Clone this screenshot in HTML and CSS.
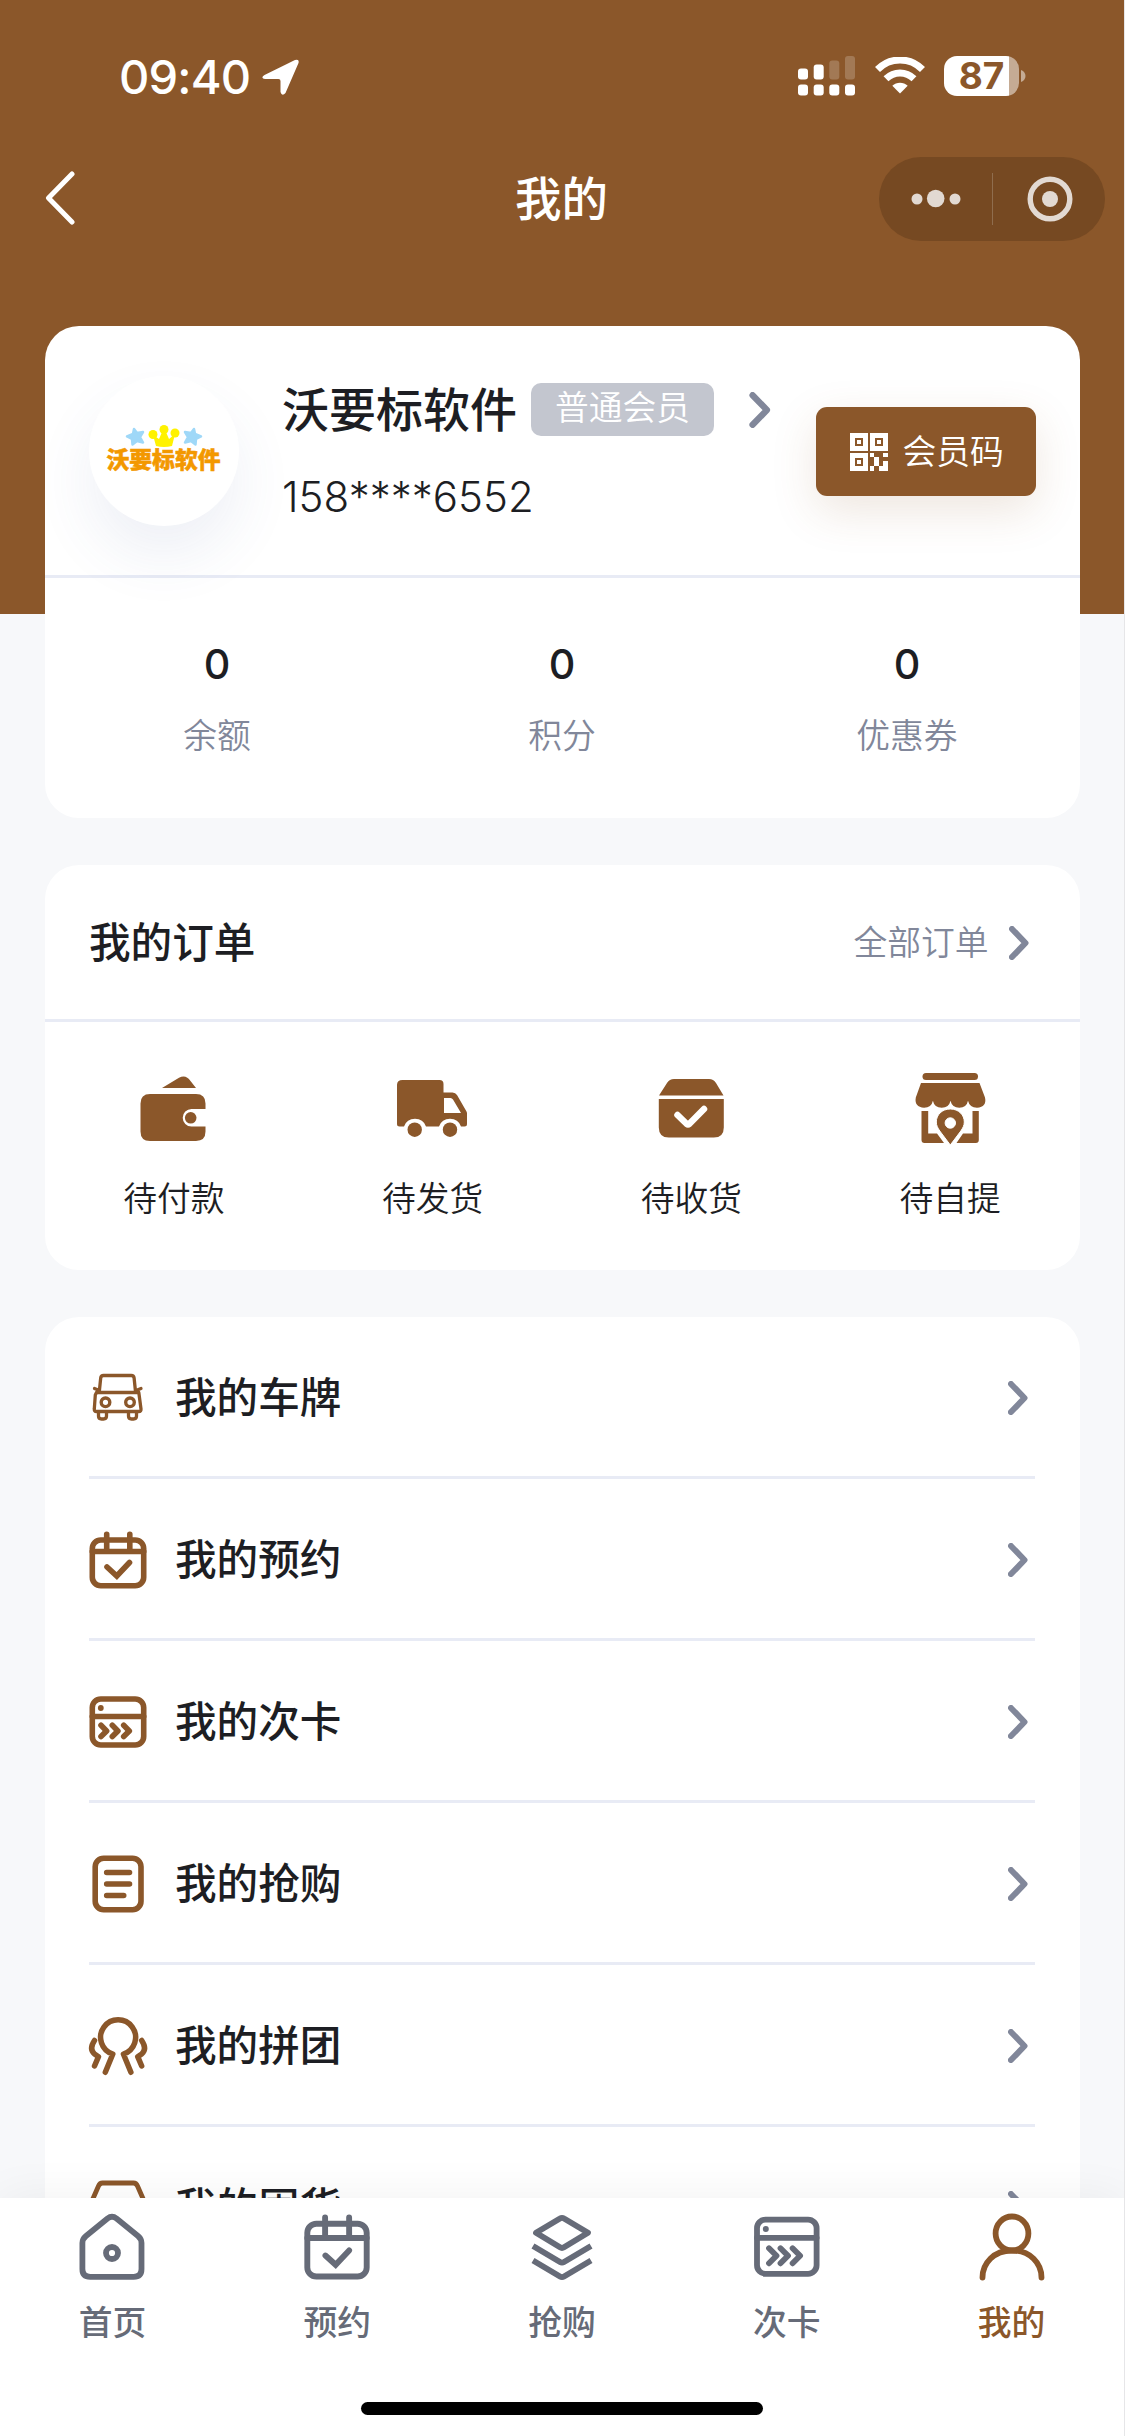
FILE: index.html
```html
<!DOCTYPE html>
<html lang="zh-CN">
<head>
<meta charset="utf-8">
<title>我的</title>
<link rel="stylesheet" href="styles.css">
</head>
<body>
<svg class="defs" width="0" height="0">
  <symbol id="chevron" viewBox="0 0 20 34"><path d="M3 3l13.500 14L3 31" fill="none" stroke="currentColor" stroke-width="6" stroke-linecap="round" stroke-linejoin="round"/></symbol>
  <symbol id="card" viewBox="0 0 60 60"><g fill="none" stroke="currentColor" stroke-width="5.600" stroke-linecap="round" stroke-linejoin="round"><rect x="4.300" y="7" width="51.400" height="46" rx="8.500"/><path d="M4.300 24.500h51.400"/><path d="M13 33.300l5.600 5.600-5.600 5.600M24.300 33.300l5.600 5.600-5.600 5.600M35.700 33.300l5.600 5.600-5.600 5.600"/></g><circle cx="12.800" cy="16" r="2.900" fill="currentColor"/></symbol>
  <symbol id="calendar" viewBox="0 0 60 60"><g fill="none" stroke="currentColor" stroke-width="5.600" stroke-linecap="round" stroke-linejoin="round"><rect x="4.300" y="10" width="51.400" height="45.800" rx="8.500"/><path d="M4.300 21.500h51.400M18.700 4.200V20M41.800 4.200V20"/><path d="M19 37l9.800 9L41.500 32.500" stroke-linejoin="miter"/></g></symbol>
</svg>
<div class="page">
  <header class="hero">
    <div class="status">
      <div class="clock">
        <span class="time">09:40</span>
        <svg width="38" height="38" viewBox="0 0 38 38"><path d="M2.500 17L33 2q4.500-1.500 3.500 3L23.500 35q-3.500 4-5-1V23q0-2-2-2H3q-5-1-.5-4z" fill="#fff"/></svg>
      </div>
      <div class="signals">
        <svg width="58" height="40" viewBox="0 0 58 40" fill="#fff"><rect x="0" y="12.500" width="10" height="11" rx="3"/><rect x="15.700" y="8.500" width="10" height="15" rx="3"/><g opacity=".2"><rect x="31.300" y="4.500" width="10" height="19" rx="3"/><rect x="47" y="0" width="10" height="23.500" rx="3"/></g><rect x="0" y="28.500" width="10" height="11" rx="3"/><rect x="15.700" y="28.500" width="10" height="11" rx="3"/><rect x="31.300" y="28.500" width="10" height="11" rx="3"/><rect x="47" y="28.500" width="10" height="11" rx="3"/></svg>
        <svg class="wifi" width="50" height="37" viewBox="0 0 50 37" fill="none" stroke="#fff"><path d="M2.500 12.500C15-.200 35-.200 47.500 12.500M11 21.800c8-7.800 20-7.800 28 0" stroke-width="7"/><path d="M25 36.500L17.300 28.700c4.200-4 11.200-4 15.400 0z" fill="#fff" stroke="none"/></svg>
        <div class="battery"><span class="level">87</span></div>
        <svg width="6" height="14" viewBox="0 0 6 14"><path d="M0 1c6 2 6 10 0 12z" fill="#c5ab94"/></svg>
      </div>
    </div>
    <nav class="navbar">
      <svg class="back" width="30" height="54" viewBox="0 0 30 54"><path d="M27 3L3.500 27 27 51" fill="none" stroke="#fff" stroke-width="5" stroke-linecap="round" stroke-linejoin="round"/></svg>
      <h1 class="title">我的</h1>
      <div class="capsule">
        <svg class="more" width="50" height="20" viewBox="0 0 50 20" fill="#e2d9d2"><circle cx="6" cy="10" r="5.500"/><circle cx="24.700" cy="9.500" r="8.800"/><circle cx="44" cy="10" r="5.500"/></svg>
        <span class="bar"></span>
        <svg class="close" width="46" height="46" viewBox="0 0 46 46"><circle cx="23" cy="23" r="19.800" fill="none" stroke="#e2d9d2" stroke-width="5.400"/><circle cx="23" cy="23" r="8" fill="#e2d9d2"/></svg>
      </div>
    </nav>
  </header>

  <main class="content">
    <section class="panel profile">
      <div class="user">
        <div class="avatar">
          <svg width="78" height="23" viewBox="0 0 78 23"><g fill="#9fd8f8" stroke="#9fd8f8" stroke-width="2.500" stroke-linejoin="round"><path d="M9 4l3 4 6-1-3 5 3 5.500-6-1.500-4.500 3.500-.5-5.500L2 11.500 8 9z"/><path d="M69 4l-3 4-6-1 3 5-3 5.500 6-1.500 4.500 3.500.5-5.500 5-2.500L70 9z"/></g><g fill="#fff200"><circle cx="28" cy="9.500" r="4.500"/><circle cx="39" cy="4.500" r="4.500"/><circle cx="50" cy="8" r="4.500"/><path d="M28 10l6 4 3.500-8h3l3.500 8 6-5-3 12q-8 2-16 0z"/></g></svg>
          <span class="brand">沃要标软件</span>
        </div>
        <div class="who">
          <div class="line"><span class="name">沃要标软件</span><span class="badge">普通会员</span><svg class="chev" width="22" height="36"><use href="#chevron"/></svg></div>
          <div class="phone">158****6552</div>
        </div>
        <div class="code">
          <svg width="38" height="38" viewBox="0 0 38 38" fill="#fff" fill-rule="evenodd"><path d="M0 0h18v18H0zM5 5v8h8V5zM20 0h18v18H20zM25 5v8h8V5zM0 20h18v18H0zM5 25v8h8v-8zM7 7h4v4H7zM27 7h4v4h-4zM7 27h4v4H7zM20 20h4v4h-4zM33 20h5v4h-5zM24 24h4v9h-4v-4zM28 33h1v-9h-1zM20 33h4v5h-4zM33 28h5v10h-9v-5h4z"/></svg>
          <span>会员码</span>
        </div>
      </div>
      <div class="stats">
        <div class="stat"><b>0</b><span>余额</span></div>
        <div class="stat"><b>0</b><span>积分</span></div>
        <div class="stat"><b>0</b><span>优惠券</span></div>
      </div>
    </section>

    <section class="panel orders">
      <div class="head"><h2>我的订单</h2><span class="all">全部订单</span><svg class="chev" width="20" height="34"><use href="#chevron"/></svg></div>
      <div class="kinds">
        <div class="kind"><svg width="75" height="75" viewBox="0 0 75 75" fill="currentColor"><path d="M26 17L43 6.700q7-3.700 11.500 3.300L60 17z"/><path d="M14 23h46q9.500 0 9.500 9.500V38h-14a8.800 8.800 0 0 0 0 17.600h14v5q0 9.400-9.500 9.400H14q-9.500 0-9.500-9.500v-28Q4.500 23 14 23z"/><circle cx="54.700" cy="46.800" r="5.800"/></svg><span>待付款</span></div>
        <div class="kind"><svg width="75" height="75" viewBox="0 0 75 75" fill="currentColor"><path fill-rule="evenodd" d="M7.500 9h37q4 0 4 4v8.500h9q3 0 4.500 2.500l9.500 16.500q.5 1 .5 2V53q0 2.500-2.500 2.500h-3.500a11.700 11.700 0 0 0-22 0H31a11.700 11.700 0 0 0-22 0H4.500Q2 55.500 2 53V14q0-5 5.500-5zM49 27v15h17l-8-13.500q-1-1.500-2.500-1.500z"/><circle cx="19.700" cy="58.700" r="7.200"/><circle cx="55" cy="58.700" r="7.200"/></svg><span>待发货</span></div>
        <div class="kind"><svg width="75" height="75" viewBox="0 0 75 75"><path fill="currentColor" d="M5 24.500L13 12q2.500-4 7-4h35q4.500 0 7 4l7.500 12.500zM4.800 28h65v28.500q0 10-10 10h-45q-10 0-10-10z"/><path d="M23.500 44l9.300 9q1.200 1 2.400 0L50 38" fill="none" stroke="#fff" stroke-width="6.500" stroke-linecap="round" stroke-linejoin="round"/></svg><span>待收货</span></div>
        <div class="kind"><svg width="75" height="75" viewBox="0 0 75 75" fill="currentColor"><rect x="9.500" y="2" width="55.500" height="7" rx="3.500"/><path d="M8 12h58.500l5.500 14.500q2 9.500-8 10.300-7.500-.3-9-7-1.500 7-8.700 7t-8.800-7q-1.500 7-8.800 7t-8.800-7q-1.500 7-8.800 7-10-.8-8.300-10.300z"/><path d="M8.500 40h6.700v22.500H24L31 72H11.500q-3 0-3-3zM59.500 40h6.300v29q0 3-3 3H43.500L50 62.500h9.500z"/><path fill-rule="evenodd" d="M37.300 38c8.500 0 14 6 14 13 0 3.500-1.500 6-3.500 9L37.300 74 26.800 60c-2-3-3.500-5.500-3.500-9 0-7 5.500-13 14-13zM37.300 46.800a5.200 5.200 0 1 0 0 10.400 5.200 5.200 0 0 0 0-10.400z"  stroke="#fff" stroke-width="1"/></svg><span>待自提</span></div>
      </div>
    </section>

    <section class="panel menu">
      <div class="row"><svg width="60" height="60" viewBox="0 0 60 60" fill="none" stroke="currentColor" stroke-width="3.300" stroke-linecap="round" stroke-linejoin="round"><path d="M11.200 24.500L12.700 10q.3-2.500 2.800-2.500h27.800q2.500 0 2.800 2.500l1.500 14.500M6.500 20.500l5 2M53 20.500l-5 2M8.500 24.500h42.300L53 41q.3 2.500-2.200 2.500H8.500Q6 43.500 6.300 41l1-14zM10.500 44v4q0 3 3 3h2q3 0 3-3v-4M40.500 44v4q0 3 3 3h2q3 0 3-3v-4"/><circle cx="17.500" cy="34.300" r="4.300" stroke-width="3.400"/><circle cx="42" cy="34.300" r="4.300" stroke-width="3.400"/></svg><span>我的车牌</span><svg class="chev" width="20" height="34"><use href="#chevron"/></svg></div>
      <div class="row"><svg width="60" height="60"><use href="#calendar"/></svg><span>我的预约</span><svg class="chev" width="20" height="34"><use href="#chevron"/></svg></div>
      <div class="row"><svg width="60" height="60"><use href="#card"/></svg><span>我的次卡</span><svg class="chev" width="20" height="34"><use href="#chevron"/></svg></div>
      <div class="row"><svg width="60" height="60" viewBox="0 0 60 60" fill="none" stroke="currentColor" stroke-width="5.600" stroke-linecap="round"><rect x="7.200" y="4.300" width="45.800" height="51.500" rx="8.500"/><path d="M18.700 18.500h22.800M18.700 30h22.800M18.700 41.500h17"/></svg><span>我的抢购</span><svg class="chev" width="20" height="34"><use href="#chevron"/></svg></div>
      <div class="row"><svg width="60" height="60" viewBox="0 0 60 60" fill="none" stroke="currentColor" stroke-width="5.500" stroke-linecap="round" stroke-linejoin="round"><path d="M17.300 56.300l7.500-18.300A17.500 17.500 0 1 1 35.400 38L42.900 56.300M6.500 24.500Q.8 33 6.500 38l4 2.700L6.500 50M53.700 24.500q5.700 8.500 0 13.500l-4 2.700 4 9.300"/></svg><span>我的拼团</span><svg class="chev" width="20" height="34"><use href="#chevron"/></svg></div>
      <div class="row"><svg width="60" height="60" viewBox="0 0 60 60" fill="none" stroke="currentColor" stroke-width="4.800" stroke-linejoin="round"><path d="M3.500 24L10.500 8q1.300-3 4-3h31q2.700 0 4 3l7 16v26q0 5-5 5h-43q-5 0-5-5zM3.500 24h53"/></svg><span>我的囤货</span><svg class="chev" width="20" height="34"><use href="#chevron"/></svg></div>
    </section>
  </main>

  <footer class="tabbar">
    <div class="tabs">
      <div class="tab"><svg width="68" height="68" viewBox="0 0 68 68" fill="none" stroke="currentColor" stroke-width="5.800" stroke-linejoin="round"><path d="M29.500 5.500q4.500-3.500 9 0L60 23q3.500 3 3.500 7v26q0 7.800-7.800 7.800H12.200q-7.800 0-7.800-7.800V30q0-4 3.600-7z"/><circle cx="34" cy="40" r="6"/></svg><span>首页</span></div>
      <div class="tab"><svg width="68" height="68" viewBox="0 0 60 60" fill="none" stroke="currentColor" stroke-width="5.200" stroke-linecap="round"><rect x="3.800" y="9.500" width="52.400" height="46.500" rx="8"/><path d="M3.800 22h52.400M19.500 4v17M40.700 4v17M19.800 37.500l9 8.200L40.700 33"/></svg><span>预约</span></div>
      <div class="tab"><svg width="68" height="68" viewBox="0 0 68 68" fill="none" stroke="currentColor" stroke-width="5.800" stroke-linejoin="round"><path d="M32 5.500q2-1.300 4 0l24 14.300-24 14.500q-2 1.300-4 0L8 19.800z"/><path d="M5 33l27 16q2 1.300 4 0l27-16M5 47.500l27 16q2 1.300 4 0l27-16"/></svg><span>抢购</span></div>
      <div class="tab"><svg width="68" height="68" viewBox="0 0 68 68" fill="none" stroke="currentColor" stroke-width="5.800" stroke-linecap="round" stroke-linejoin="round"><rect x="4" y="6.600" width="59.600" height="54.200" rx="8.500"/><path d="M4 24.800h59.600M16 35.300l7.500 7.500-7.500 7.500M27.500 35.300l7.500 7.500-7.500 7.500M39.600 35.300l7.500 7.500-7.500 7.500"/><circle cx="12.800" cy="16" r="3" fill="currentColor" stroke="none"/></svg><span>次卡</span></div>
      <div class="tab active"><svg width="68" height="68" viewBox="0 0 68 68" fill="none" stroke="currentColor" stroke-width="5.800" stroke-linecap="round"><ellipse cx="34" cy="20.500" rx="16.400" ry="17"/><path d="M4.500 64.500c0-14 11-27 29.500-27s29.500 13 29.500 27"/></svg><span>我的</span></div>
    </div>
    <div class="home-indicator"></div>
  </footer>
</div>
</body>
</html>
```
FILE: styles.css
```css
* { box-sizing: border-box; margin: 0; padding: 0; }
html, body { width: 1125px; height: 2436px; overflow: hidden; }
body {
  background: #e6e6e8;
  color: #1d1e23;
  font-family: Inter, "Noto Sans CJK SC", sans-serif;
}
svg { display: block; flex: none; }
.defs { position: absolute; }
.page { position: relative; width: 1124px; height: 2436px; background: #f7f8fa; overflow: hidden; display: flex; flex-direction: column; }

.hero { flex: none; height: 614px; background: #8b572a; color: #fff; }
.status { height: 150px; padding: 55px 97px 0 119px; display: flex; justify-content: space-between; align-items: flex-start; }
.clock { display: flex; align-items: center; gap: 12px; height: 43px; }
.time { font-size: 47px; font-weight: 550; line-height: 44px; letter-spacing: -0.8px; }
.signals { display: flex; align-items: center; height: 41px; }
.wifi { margin: 0 19px; }
.battery { width: 75px; height: 40px; margin-right: 2px; border-radius: 13px; background: linear-gradient(90deg, #fff 65px, #c5ab94 65px); }
.level { display: block; width: 75px; color: #8b572a; font-size: 37px; font-weight: 700; line-height: 40px; text-align: center; }
.navbar { height: 97px; padding: 0 19px 0 45px; display: grid; grid-template-columns: 456px 1fr auto; align-items: center; }
.title { padding-left: 14px; font-size: 46.500px; font-weight: 500; line-height: 60px; }
.back { margin-top: -2px; }
.capsule { width: 226px; height: 84px; border-radius: 42px; background: #764922; display: flex; align-items: center; }
.more { margin-left: 32px; }
.bar { width: 1px; height: 52px; margin-left: 31px; background: #8f6d4e; }
.close { margin-left: 34px; }

.content { margin-top: -288px; padding: 0 44.500px; display: flex; flex-direction: column; gap: 47px; }
.panel { background: #fff; border-radius: 34px; }
.profile { height: 492px; }
.user { height: 252px; padding: 0 44px; border-bottom: 3px solid #e8ebf5; display: flex; align-items: center; }
.avatar { width: 150px; height: 150px; border-radius: 50%; background: #fff; box-shadow: 0 30px 60px rgba(70, 85, 150, .09); display: flex; flex-direction: column; align-items: center; padding-top: 49px; }
.brand { color: #f39800; font-size: 22.800px; font-weight: 900; line-height: 24px; -webkit-text-stroke: .5px #f39800; }
.who { margin-left: 43.500px; padding-top: 3px; }
.line { display: flex; align-items: center; height: 54px; }
.name { font-size: 47px; font-weight: 500; line-height: 54px; }
.badge { width: 183px; height: 53px; margin-left: 14px; border-radius: 10px; background: #c3c6cf; color: #fff; font-size: 33.750px; font-weight: 350; line-height: 50px; text-align: center; }
.line .chev { margin-left: 35px; }
.phone { margin-top: 35px; font-size: 42px; font-weight: 350; line-height: 50px; letter-spacing: 0; }
.chev { color: #81879a; }
.code { width: 220px; height: 89px; margin: 2px 0 0 auto; border-radius: 11px; background: #8b572a; box-shadow: 0 15px 45px rgba(139, 87, 42, .15); color: #fff; display: flex; align-items: center; padding-left: 34px; gap: 15px; font-size: 33.750px; font-weight: 350; line-height: 50px; }
.stats { display: flex; padding-top: 61px; }
.stat { flex: 1; display: flex; flex-direction: column; align-items: center; gap: 22px; }
.stat b { font-size: 41.250px; font-weight: 500; line-height: 50px; }
.stat span { font-size: 33.750px; font-weight: 350; line-height: 50px; color: #81879a; }

.orders { height: 405px; }
.head { height: 157px; padding: 2px 51px 0 44.500px; border-bottom: 3px solid #e8ebf5; display: flex; align-items: center; }
.head h2 { flex: 1; font-size: 41.600px; font-weight: 500; line-height: 60px; }
.all { margin-right: 20px; font-size: 33.750px; font-weight: 350; line-height: 50px; color: #81879a; }
.kinds { display: flex; padding-top: 49px; }
.kind { flex: 1; display: flex; flex-direction: column; align-items: center; gap: 28px; color: #8b572a; }
.kind span { font-size: 33.750px; font-weight: 350; line-height: 50px; color: #1d1e23; }

.menu { padding: 0 44.500px; height: 1000px; }
.row { height: 162px; padding: 2px 7px 0 0; border-bottom: 3px solid #e8ebf5; display: flex; align-items: center; color: #8b572a; }
.row > svg:first-child { margin-left: -1.500px; }
.row span { flex: 1; margin-left: 27.500px; font-size: 41.600px; font-weight: 500; line-height: 60px; color: #1d1e23; }

.tabbar { position: absolute; left: 0; right: 0; bottom: 0; height: 238px; background: #fff; box-shadow: 0 0 45px rgba(0, 0, 0, .06); display: flex; flex-direction: column; align-items: center; }
.tabs { width: 100%; flex: 1; display: flex; padding-top: 15px; }
.tab { flex: 1; display: flex; flex-direction: column; align-items: center; gap: 17px; color: #666b78; }
.tab span { font-size: 33.750px; font-weight: 500; line-height: 50px; }
.tab.active { color: #8b572a; }
.home-indicator { width: 402px; height: 13px; margin-bottom: 21px; border-radius: 7px; background: #000; }
```
